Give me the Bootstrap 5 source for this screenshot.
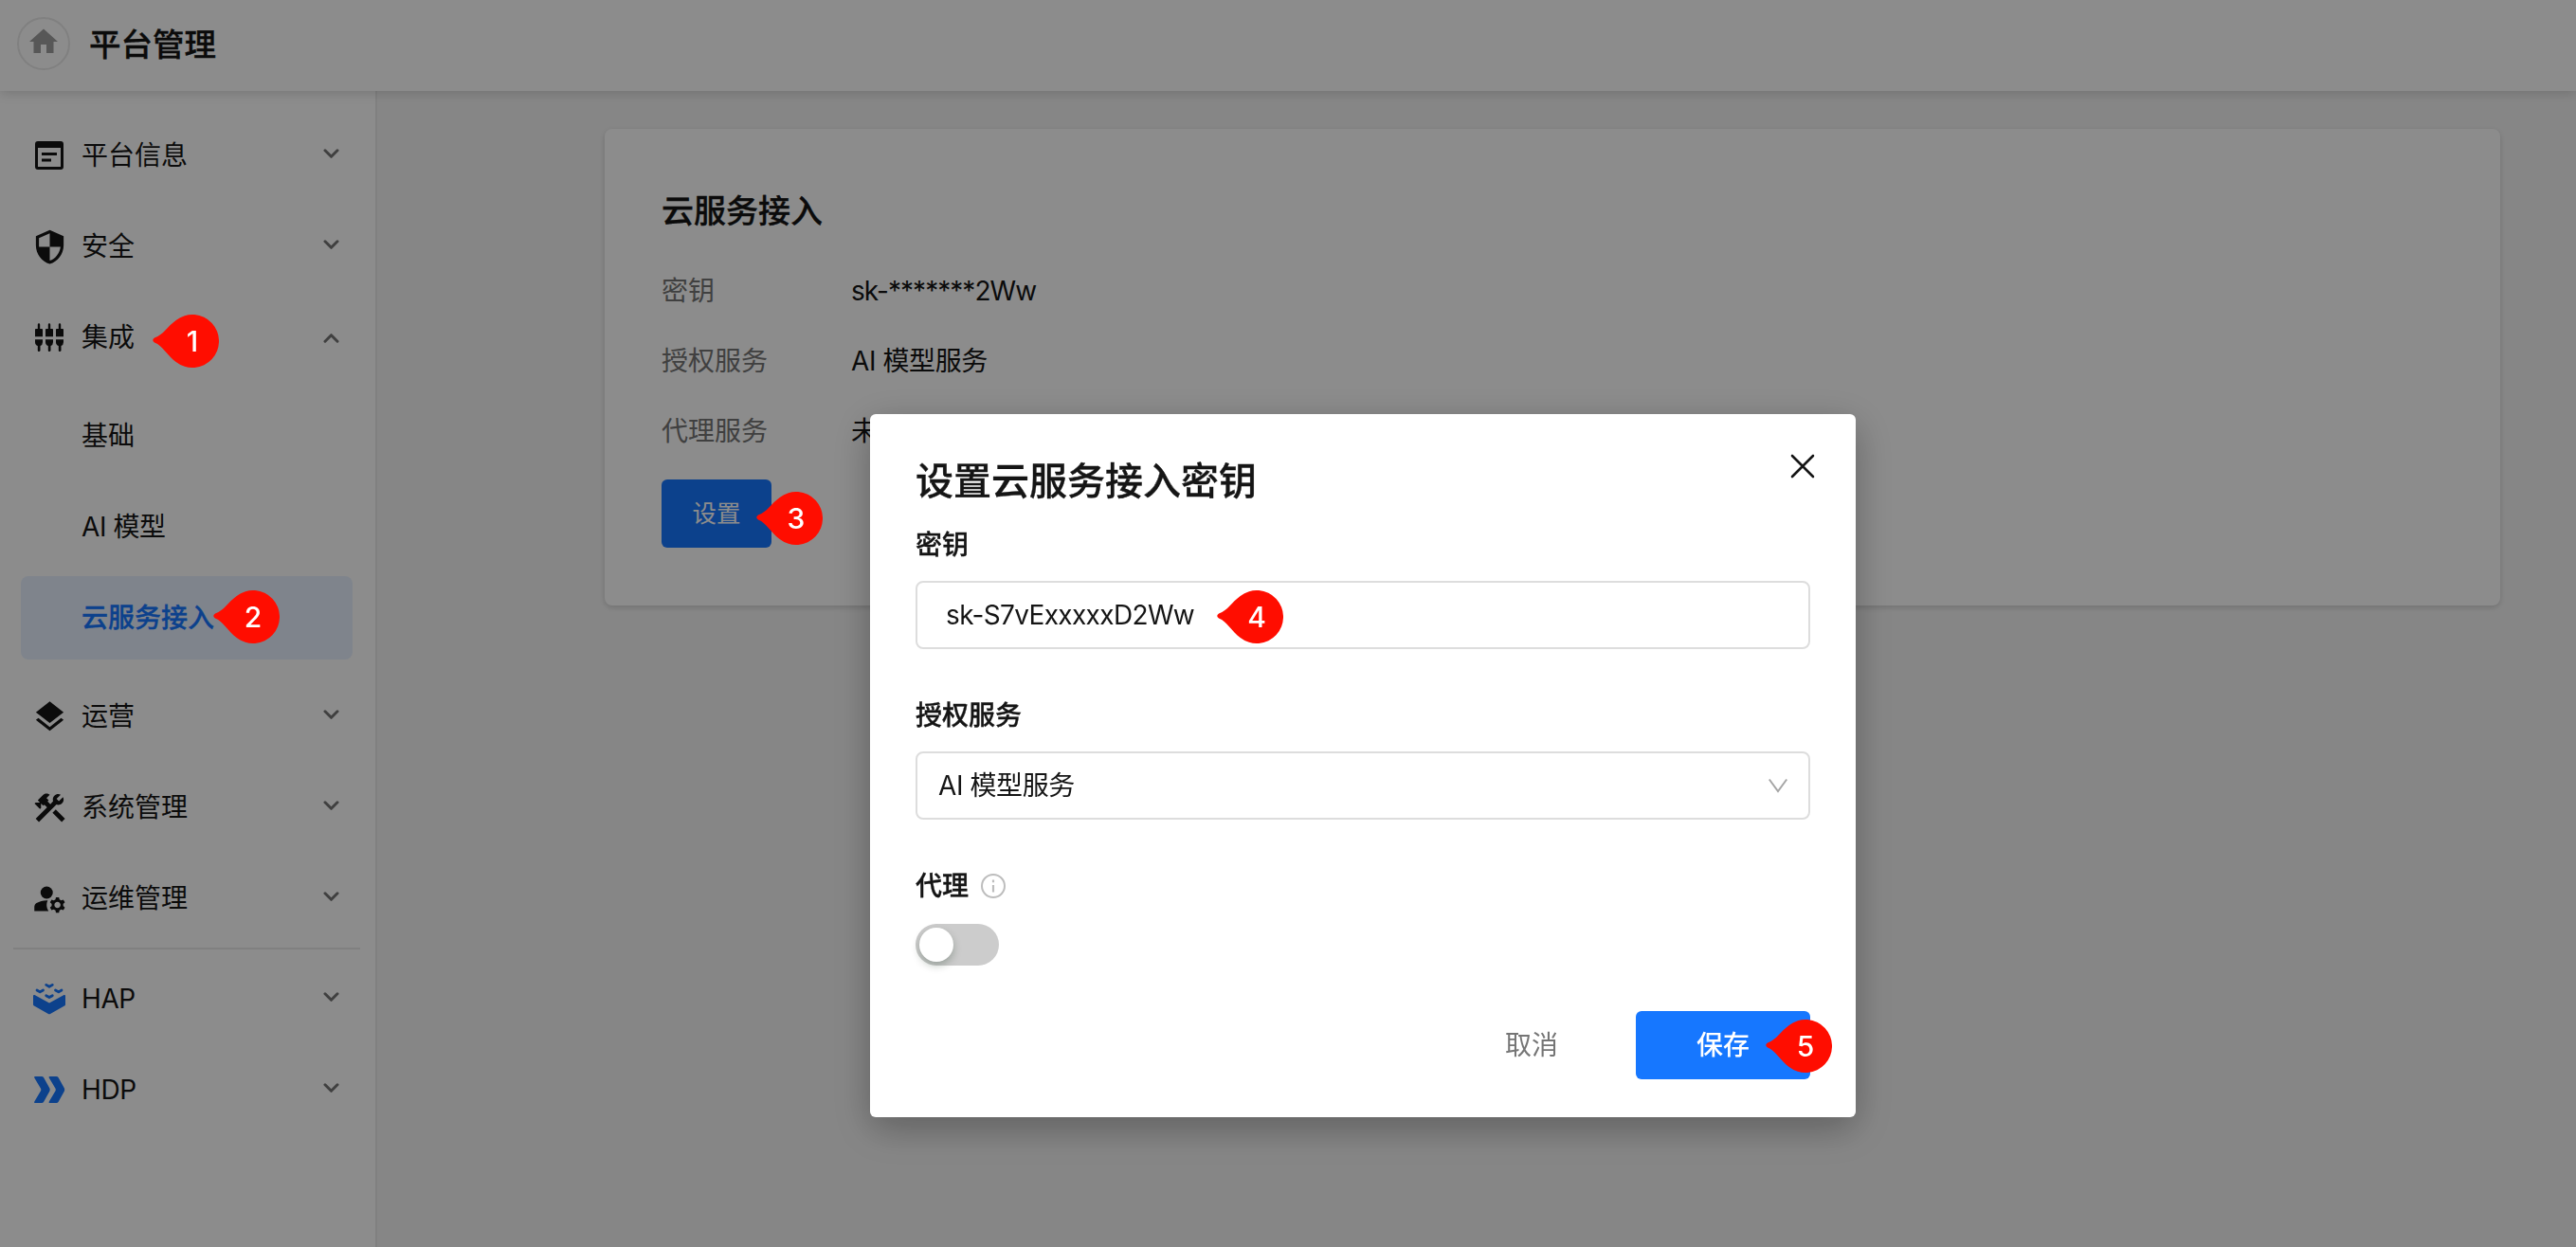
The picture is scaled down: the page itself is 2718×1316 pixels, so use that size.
<!DOCTYPE html>
<html lang="zh-CN">
<head>
<meta charset="utf-8">
<title>平台管理</title>
<link href="https://cdn.jsdelivr.net/npm/bootstrap@5.3.0/dist/css/bootstrap.min.css" rel="stylesheet">
<style>
  body{font-family:Inter,"Noto Sans CJK SC",sans-serif;font-size:28px;line-height:40px;color:#151515;background:#f5f5f5;height:1316px;overflow:hidden}
  svg{display:block;overflow:visible;flex:none}
  .medium{font-weight:500;-webkit-text-stroke:.35px currentColor}
  .topbar{height:96px;padding:0 18px;box-shadow:0 2px 12px rgba(0,0,0,.16);z-index:2}
  .home-btn{width:56px;height:56px;border:2px solid #eaeaea;margin-top:-4px;color:#9e9e9e;margin-right:20px}
  .page-name{font-size:33.5px;margin-top:-2px}
  .side{width:398px;border-right:2px solid #eaeaea;padding:20px 16px 0 14px}
  .side-item{height:96px;padding:0 22px 0 23px}
  .side-item .glyph{width:30px;height:30px;margin-right:19px;display:flex;align-items:center;justify-content:center}
  .chev{color:#757575;margin-top:-4px}
  .sub-item{height:88px;margin:4px 8px;padding-left:64px;border-radius:8px}
  .sub-item.current{background:#e8f1ff;color:#1677ff}
  .side hr{margin:4px 0;border:0;border-top:2px solid #eaeaea;opacity:1;width:366px}
  .main-area{padding:40px 80px 0 240px}
  .panel{height:503px;border:0;border-radius:8px;padding:64px 60px 0;box-shadow:0 2px 6px rgba(0,0,0,.16)}
  .panel-title{font-size:34px;line-height:46px;margin-bottom:41px}
  .info-row{height:40px;margin-bottom:34px}
  .info-row .key{width:200px;color:#757575}
  .masked{letter-spacing:-.95px}
  .secret{letter-spacing:-.65px}
  .tight{letter-spacing:-.4px}
  .blue-btn{background:#1677ff;color:#fff;border:0;border-radius:6px;height:72px;display:flex;align-items:center;justify-content:center;padding:0}
  .blue-btn.set{width:116px;font-size:25.5px;margin-top:-3px}
  .blue-btn.save{width:184px;font-size:28px;-webkit-text-stroke:0}
  .veil{background:rgba(0,0,0,.45);z-index:10;padding:437px 0 0 918px}
  .dialog-box{width:1040px;height:742px;border-radius:6px;padding:48px 48px 40px;box-shadow:0 12px 40px rgba(0,0,0,.3)}
  .dialog-title{font-size:40px;line-height:48px;margin:-1px 0 23px}
  .x-icon{margin:-5px -4px 0 0}
  .field{height:72px;border:2px solid #ddd;border-radius:8px;margin:18px 0 50px;color:#151515;font-size:28px}
  .field.key-input{padding-left:30px}
  .field.service-select{padding:0 22px}
  .toggle{width:88px;height:44px;border-radius:22px;background:#ccc;padding:4px;margin-top:20px}
  .toggle i{display:block;width:36px;height:36px;border-radius:50%;background:#fff;box-shadow:0 4px 8px rgba(0,35,11,.25)}
  .cancel{color:#757575;width:64px;margin-right:78px}
  .pin{position:absolute;width:70px;height:56px}
  .pin svg{position:absolute;inset:0}
  .pin b{position:absolute;left:14px;width:56px;height:56px;line-height:57px;text-align:center;color:#fff;font-weight:500;font-size:30px}
  .pin-1{left:161px;top:332px}
  .pin-2{left:225px;top:623px}
  .pin-3{left:798px;top:519px}
  .pin-4{left:1284px;top:623px}
  .pin-5{left:1863px;top:1076px}
</style>
<script src="https://cdn.jsdelivr.net/npm/bootstrap@5.3.0/dist/js/bootstrap.bundle.min.js"></script>
</head>
<body class="d-flex flex-column">
<svg width="0" height="0" class="position-absolute">
  <symbol id="down" viewBox="0 0 16 10"><path d="M1.500 1.800 8 8.300l6.500-6.500" fill="none" stroke="currentColor" stroke-width="3" stroke-linecap="round" stroke-linejoin="round"/></symbol>
  <symbol id="drop" viewBox="0 0 70 56"><path d="M2 24.500C12 21 15 13 24.700 6A28 28 0 1 1 24.700 50C15 43 11 33 2 29.500Q-1.500 27 2 24.500Z" fill="#ff0d00"/></symbol>
</svg>

<header class="topbar bg-white d-flex align-items-center position-relative">
  <span class="home-btn rounded-circle d-flex align-items-center justify-content-center"><svg width="36" height="36" viewBox="0 0 24 24" style="margin-top:-5px"><path fill="currentColor" d="M10 20v-6h4v6h5v-8h3L12 3 2 12h3v8z"/></svg></span>
  <span class="page-name medium">平台管理</span>
</header>

<div class="d-flex flex-grow-1">
  <nav class="side bg-white flex-shrink-0">
    <div class="side-item d-flex align-items-center"><span class="glyph"><svg width="30" height="30" viewBox="0 0 30 30"><path fill="#151515" fill-rule="evenodd" d="M3 0H27Q30 0 30 3V27Q30 30 27 30H3Q0 30 0 27V3Q0 0 3 0ZM3 7V27H27V7ZM7 12H23V15H7ZM7 18.500H17V21.500H7Z"/></svg></span>平台信息<svg class="chev ms-auto" width="17" height="10"><use href="#down"/></svg></div>
    <div class="side-item d-flex align-items-center"><span class="glyph"><svg width="39" height="39" viewBox="0 0 24 24"><path fill="#151515" d="M12 1 3 5v6c0 5.550 3.840 10.740 9 12 5.160-1.260 9-6.450 9-12V5l-9-4zm0 10.990h7c-.53 4.120-3.280 7.790-7 8.940V12H5V6.300l7-3.110v8.800z"/></svg></span>安全<svg class="chev ms-auto" width="17" height="10"><use href="#down"/></svg></div>
    <div class="side-item d-flex align-items-center"><span class="glyph"><svg width="30" height="30" viewBox="0 0 30 30" fill="#151515"><g id="plug"><path d="M2.800 6V1.500Q2.800.3 4 .3T5.200 1.500V6H7.300Q8 6 8 7V14.200H0V7Q0 6 .7 6ZM0 17.200H8V20Q8 23 5.500 24V29Q5.200 30 4 30T2.800 29V24Q0 23 0 20Z"/></g><use href="#plug" x="11"/><use href="#plug" x="22"/></svg></span>集成<svg class="chev ms-auto" width="17" height="10" style="transform:rotate(180deg);margin-top:2px"><use href="#down"/></svg></div>
    <div class="py-2">
      <div class="sub-item d-flex align-items-center">基础</div>
      <div class="sub-item d-flex align-items-center mt-2 tight">AI 模型</div>
      <div class="sub-item current medium d-flex align-items-center mt-2">云服务接入</div>
    </div>
    <div class="side-item d-flex align-items-center"><span class="glyph"><svg width="39" height="39" viewBox="0 0 24 24"><path fill="#151515" d="m11.990 18.540-7.370-5.730L3 14.070l9 7 9-7-1.630-1.270-7.380 5.740zM12 16l7.360-5.730L21 9l-9-7-9 7 1.630 1.270L12 16z"/></svg></span>运营<svg class="chev ms-auto" width="17" height="10"><use href="#down"/></svg></div>
    <div class="side-item d-flex align-items-center"><span class="glyph"><svg width="39" height="39" viewBox="0 0 24 24"><path fill="#151515" d="M13.780 15.300 19.780 21.300 21.890 19.140 15.890 13.140 13.780 15.300M17.500 10.100C17.110 10.100 16.690 10.050 16.360 9.910L4.970 21.250 2.860 19.140 10.270 11.740 8.500 9.960 7.780 10.660 6.330 9.250V12.110L5.630 12.810 2.110 9.250 2.810 8.550H5.620L4.220 7.140 7.780 3.580C8.950 2.410 10.830 2.410 12 3.580L9.890 5.740 11.300 7.140 10.590 7.850 12.380 9.630 14.200 7.750C14.060 7.420 14 7 14 6.630 14 4.660 15.560 3.110 17.500 3.110 18.090 3.110 18.610 3.250 19.080 3.530L16.410 6.200 17.910 7.700 20.580 5.030C20.860 5.500 21 6 21 6.630 21 8.550 19.450 10.100 17.500 10.100Z"/></svg></span>系统管理<svg class="chev ms-auto" width="17" height="10"><use href="#down"/></svg></div>
    <div class="side-item d-flex align-items-center"><span class="glyph"><svg width="39" height="39" viewBox="0 0 24 24" fill="#151515"><circle cx="10" cy="8" r="4"/><path d="M10.670 13.020c-.22-.01-.44-.02-.67-.02-2.420 0-4.680.67-6.610 1.820-.88.52-1.390 1.500-1.390 2.530V20h9.260c-.79-1.130-1.260-2.510-1.260-4 0-1.070.25-2.070.67-2.980zM20.750 16c0-.22-.03-.42-.06-.63l1.140-1.010-1-1.730-1.450.49c-.32-.27-.68-.48-1.080-.63L18 11h-2l-.3 1.490c-.4.15-.76.36-1.080.63l-1.450-.49-1 1.730 1.140 1.010c-.03.21-.06.41-.06.63s.03.42.06.63l-1.140 1.010 1 1.730 1.450-.49c.32.27.68.48 1.080.63L16 21h2l.3-1.490c.4-.15.76-.36 1.080-.63l1.450.49 1-1.730-1.140-1.010c.03-.21.06-.41.06-.63zM17 18c-1.100 0-2-.9-2-2s.9-2 2-2 2 .9 2 2-.9 2-2 2z"/></svg></span>运维管理<svg class="chev ms-auto" width="17" height="10"><use href="#down"/></svg></div>
    <hr>
    <div class="side-item d-flex align-items-center tight"><span class="glyph"><svg width="34" height="32" viewBox="0 0 34 32" fill="#1677ff"><path d="M1.500 12 17 20.500 32.500 12Q34 11.500 34 13V22Q34 23 33 23.600L18 32Q17 32.600 16 32L1 23.600Q0 23 0 22V13Q0 11.500 1.500 12Z"/><g fill="none" stroke="#1677ff" stroke-width="2.800" stroke-linecap="round" stroke-linejoin="round"><path d="M13.700 1.400 17 3.300l3.300-1.900M4 7l3.200 1.900L10.500 7M23.500 7l3.300 1.900L30 7M13.700 12.700 17 14.500l3.300-1.800"/></g></svg></span>HAP<svg class="chev ms-auto" width="17" height="10"><use href="#down"/></svg></div>
    <div class="side-item d-flex align-items-center tight"><span class="glyph"><svg width="32" height="28" viewBox="0 0 32 28" fill="#1677ff"><path id="arr" d="M1 0H8Q9.300 0 10 1.100L16.400 12.500Q17 14 16.400 15.500L10 26.900Q9.300 28 8 28H1Q-.6 28 .3 26.500L7 15.300Q7.700 14 7 12.700L.3 1.500Q-.6 0 1 0Z"/><use href="#arr" x="15.500"/></svg></span>HDP<svg class="chev ms-auto" width="17" height="10"><use href="#down"/></svg></div>
  </nav>

  <main class="main-area flex-grow-1">
    <div class="panel card bg-white">
      <div class="panel-title medium">云服务接入</div>
      <div class="info-row d-flex"><span class="key">密钥</span><span class="masked">sk-*******2Ww</span></div>
      <div class="info-row d-flex"><span class="key">授权服务</span><span class="tight">AI 模型服务</span></div>
      <div class="info-row d-flex"><span class="key">代理服务</span><span>未设置</span></div>
      <button class="btn blue-btn set">设置</button>
    </div>
  </main>
</div>

<div class="veil position-fixed top-0 start-0 w-100 h-100">
  <div class="dialog-box bg-white d-flex flex-column">
    <div class="d-flex justify-content-between">
      <div class="dialog-title medium">设置云服务接入密钥</div>
      <svg class="x-icon" width="24" height="24" viewBox="0 0 24 24"><path d="m1 1 22 22M23 1 1 23" stroke="#151515" stroke-width="2.600" stroke-linecap="round"/></svg>
    </div>
    <div class="medium">密钥</div>
    <div class="field key-input secret d-flex align-items-center">sk-S7vExxxxxD2Ww</div>
    <div class="medium">授权服务</div>
    <div class="field service-select tight d-flex align-items-center justify-content-between">AI 模型服务
      <svg width="20" height="14" viewBox="0 0 20 14"><path d="M.8.5 10 13 19.200.5" fill="none" stroke="#a6a6a6" stroke-width="2"/></svg>
    </div>
    <div class="medium d-flex align-items-center">代理
      <svg width="26" height="26" viewBox="0 0 26 26" style="margin-left:13px"><circle cx="13" cy="13" r="12" fill="none" stroke="#bdbdbd" stroke-width="2"/><path d="M13 12v7.500M13 6.500v2.700" stroke="#bdbdbd" stroke-width="2.200"/></svg>
    </div>
    <div class="toggle"><i></i></div>
    <div class="d-flex align-items-center justify-content-end mt-auto">
      <span class="cancel text-center">取消</span>
      <button class="btn blue-btn save medium">保存</button>
    </div>
  </div>
  <div class="pin pin-1"><svg width="70" height="56"><use href="#drop"/></svg><b>1</b></div>
  <div class="pin pin-2"><svg width="70" height="56"><use href="#drop"/></svg><b>2</b></div>
  <div class="pin pin-3"><svg width="70" height="56"><use href="#drop"/></svg><b>3</b></div>
  <div class="pin pin-4"><svg width="70" height="56"><use href="#drop"/></svg><b>4</b></div>
  <div class="pin pin-5"><svg width="70" height="56"><use href="#drop"/></svg><b>5</b></div>
</div>
</body>
</html>
